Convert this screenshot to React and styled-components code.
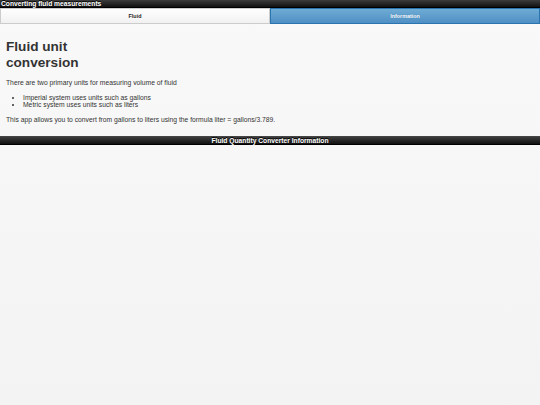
import React from "react";
import styled, { createGlobalStyle } from "styled-components";

const Global = createGlobalStyle`
  html, body { margin: 0; padding: 0; }
  body {
    background: #f6f6f6;
    font-family: "Liberation Sans", Arial, Helvetica, sans-serif;
    color: #333;
  }
`;

const Page = styled.div`
  width: 540px;
  min-height: 405px;
  background: linear-gradient(#f9f9f9, #f3f3f3);
  display: flex;
  flex-direction: column;
`;

const Header = styled.header`
  height: 8px;
  background: linear-gradient(#3c3c3c, #111);
  border-bottom: 1px solid #000;
  box-sizing: border-box;
  display: flex;
  align-items: center;
  padding-left: 1px;
`;

const HeaderTitle = styled.h1`
  margin: 0;
  font-size: 6.7px;
  line-height: 8px;
  font-weight: bold;
  color: #fff;
  text-shadow: 0 -1px 0 #000;
`;

const NavBar = styled.nav`
  display: grid;
  grid-template-columns: 1fr 1fr;
  height: 16px;
`;

const Tab = styled.div`
  display: flex;
  align-items: center;
  justify-content: center;
  font-size: 5.4px;
  font-weight: bold;
  box-sizing: border-box;
  border: 1px solid ${(p) => (p.$active ? "#2a75b0" : "#ccc")};
  background: ${(p) =>
    p.$active
      ? "linear-gradient(#6facd5, #4f8fc4)"
      : "linear-gradient(#fefefe, #f1f1f1)"};
  color: ${(p) => (p.$active ? "#fff" : "#222")};
  text-shadow: ${(p) => (p.$active ? "0 0 1px #3373a5" : "0 1px 0 #fff")};
`;

const Content = styled.main`
  padding: 0 6px;
  height: 112px;
  box-sizing: border-box;
`;

const Title = styled.h2`
  margin: 15px 0 0;
  font-size: 13.6px;
  line-height: 16px;
  font-weight: bold;
  color: #333;
  width: 90px;
`;

const Para = styled.p`
  margin: ${(p) => p.$top || 0}px 0 0;
  font-size: 6.75px;
  line-height: 7px;
  color: #333;
`;

const List = styled.ul`
  margin: 8px 0 0;
  padding-left: 17px;
  font-size: 6.75px;
  line-height: 7px;
`;

const Footer = styled.footer`
  height: 9px;
  background: linear-gradient(#3c3c3c, #111);
  border-top: 1px solid #444;
  border-bottom: 1px solid #000;
  box-sizing: border-box;
  display: flex;
  align-items: center;
  justify-content: center;
`;

const FooterTitle = styled.h3`
  margin: 0;
  font-size: 6.7px;
  line-height: 8px;
  font-weight: bold;
  color: #fff;
  text-shadow: 0 -1px 0 #000;
`;

export default function App() {
  return (
    <>
      <Global />
      <Page>
        <Header>
          <HeaderTitle>Converting fluid measurements</HeaderTitle>
        </Header>
        <NavBar>
          <Tab>Fluid</Tab>
          <Tab $active>Information</Tab>
        </NavBar>
        <Content>
          <Title>Fluid unit conversion</Title>
          <Para $top={8}>There are two primary units for measuring volume of fluid</Para>
          <List>
            <li>Imperial system uses units such as gallons</li>
            <li>Metric system uses units such as liters</li>
          </List>
          <Para $top={8}>
            This app allows you to convert from gallons to liters using the formula liter = gallons/3.789.
          </Para>
        </Content>
        <Footer>
          <FooterTitle>Fluid Quantity Converter Information</FooterTitle>
        </Footer>
      </Page>
    </>
  );
}
